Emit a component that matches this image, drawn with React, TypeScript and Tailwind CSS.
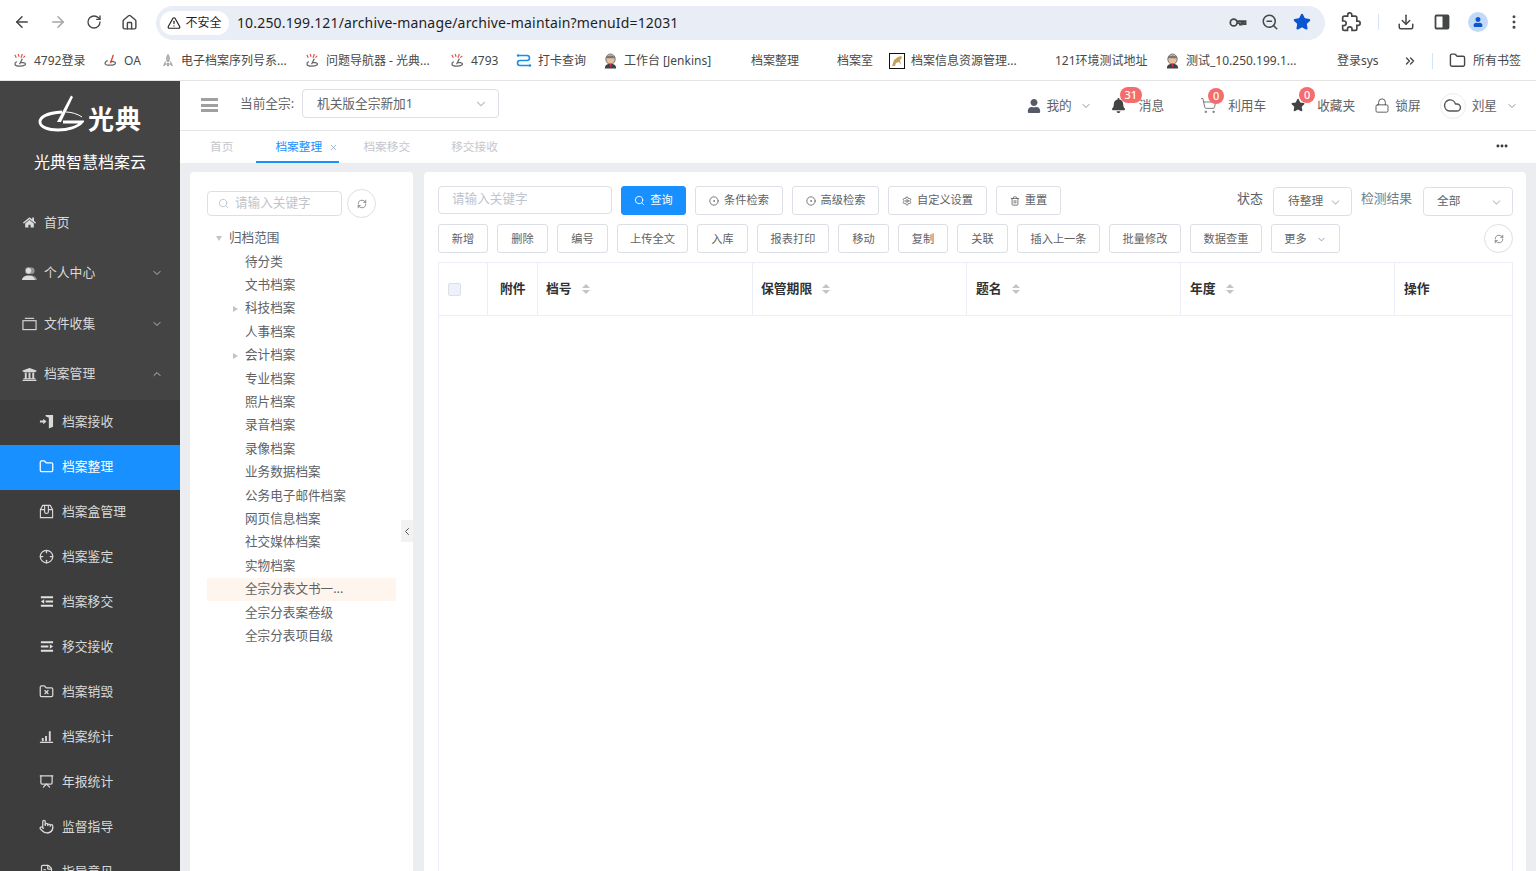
import React from "react";
import {
  ArrowLeft, ArrowRight, RotateCw, Home, TriangleAlert, ZoomOut, Star, Download, EllipsisVertical,
  ChevronsRight, Folder, ChevronDown, ChevronUp, ChevronLeft, Search, CircleDot, Settings, Trash2, ShoppingCart, Lock, Cloud, X, Ellipsis,
  Crosshair, FolderX, Presentation, Pointer, FileText, RefreshCw,
} from "lucide-react";
import { FaHome, FaUser, FaBell, FaStar, FaUniversity } from "react-icons/fa";

const Guang = () => (
  <svg viewBox="0 0 16 16" className="w-[15px] h-[15px] shrink-0">
    <path d="M2 2l1.5 3M5.5 1l1 3M10 1L8.5 5M13 3l-2 2" stroke="#e0584f" strokeWidth="1.3" fill="none" />
    <path d="M10 6L7 12M4 9c-3 2-3 5 3 5s7-2 6-3c-1-1-3-1-5-1" stroke="#666" strokeWidth="1.3" fill="none" />
  </svg>
);
const Oa = () => (
  <svg viewBox="0 0 16 16" className="w-[15px] h-[15px] shrink-0">
    <path d="M11 2L8 11" stroke="#d9453d" strokeWidth="1.5" fill="none" />
    <path d="M5 8c-4 2-4 5 2 5s7-2 6-3c-1-1-3-1-5-1" stroke="#666" strokeWidth="1.3" fill="none" />
  </svg>
);
const Rocket = () => (
  <svg viewBox="0 0 16 16" className="w-[14px] h-[15px] shrink-0">
    <path d="M8 1c2 3 2 5 1 8H7C6 6 6 4 8 1zM5 9l-2 5 3-2M11 9l2 5-3-2M7 11h2v3H7z" fill="#bbb" stroke="#777" strokeWidth=".6" />
  </svg>
);
const Flow = () => (
  <svg viewBox="0 0 16 16" className="w-[16px] h-[16px] shrink-0">
    <path d="M2 2.500h9a2.500 2.500 0 010 5H4a2.500 2.500 0 000 5h10" stroke="#1a8cf0" strokeWidth="1.6" fill="none" />
    <circle cx="2" cy="2.500" r="1.2" fill="#1a8cf0" />
    <circle cx="14" cy="12.500" r="1.2" fill="#1a8cf0" />
  </svg>
);
const Jenkins = () => (
  <svg viewBox="0 0 16 16" className="w-[15px] h-[16px] shrink-0">
    <ellipse cx="8" cy="6" rx="5" ry="5.500" fill="#e8bfa0" stroke="#555" strokeWidth=".8" />
    <path d="M3 5c0-4 10-4 10 0" fill="#777" />
    <path d="M2 16c0-4 3-5 6-5s6 1 6 5z" fill="#3f3f4f" />
    <path d="M7 11h2l-.4 3h-1.200z" fill="#d33" />
  </svg>
);
const Cat = () => (
  <svg viewBox="0 0 16 16" className="w-[16px] h-[16px] shrink-0">
    <rect x=".5" y=".5" width="15" height="15" fill="#fff" stroke="#111" />
    <path d="M3 13l2-6 4-3 3-1 1 2-2 2 1 5-2-3-3 1-1 3z" fill="#c9a15a" />
  </svg>
);

const bookmarks: { w: string; t: string; i?: React.ReactNode }[] = [
  { w: "w-[74px]", t: "4792登录", i: <Guang /> },
  { w: "w-[42px]", t: "OA", i: <Oa /> },
  { w: "w-[128px]", t: "电子档案序列号系...", i: <Rocket /> },
  { w: "w-[129px]", t: "问题导航器 - 光典...", i: <Guang /> },
  { w: "w-[50px]", t: "4793", i: <Guang /> },
  { w: "w-[71px]", t: "打卡查询", i: <Flow /> },
  { w: "w-[110px]", t: "工作台 [Jenkins]", i: <Jenkins /> },
];

const Bookmark = ({ w, t, i }: { w: string; t: string; i?: React.ReactNode }) => (
  <div className={`${w} flex items-center gap-[6px] shrink-0 whitespace-nowrap`}>
    {i}
    <span>{t}</span>
  </div>
);

const KeyIcon = () => (
  <svg viewBox="0 0 20 20" className="w-[19px] h-[19px]" fill="none" stroke="currentColor" strokeWidth="1.8">
    <circle cx="6" cy="10" r="3.600" />
    <path d="M9.600 8.600H18.500v3.200h-2v-1.400h-2v1.800h-2v-1.600H9.600" />
  </svg>
);
const ExtIcon = () => (
  <svg viewBox="0 0 24 24" className="w-[20px] h-[20px]" fill="none" stroke="currentColor" strokeWidth="2">
    <path d="M20.500 11H19V7a2 2 0 00-2-2h-4V3.500a2.500 2.500 0 00-5 0V5H4a2 2 0 00-2 2v3.800h1.500a2.700 2.700 0 010 5.400H2V20a2 2 0 002 2h3.800v-1.500a2.700 2.700 0 015.400 0V22H17a2 2 0 002-2v-4h1.500a2.500 2.500 0 000-5z" />
  </svg>
);
const SideIcon = () => (
  <svg viewBox="0 0 18 18" className="w-[18px] h-[18px]">
    <rect x="2.500" y="2.500" width="13" height="13" rx="1" fill="none" stroke="currentColor" strokeWidth="1.8" />
    <rect x="9.500" y="2.500" width="6" height="13" fill="currentColor" />
  </svg>
);

const ChromeBar = () => (
  <div className="h-[81px] bg-white border-b border-[#e3e3e3] shrink-0">
    <div className="h-[44px] flex items-center pl-[13px] pr-[13px] text-[#444746]">
      <ArrowLeft className="w-[18px] h-[18px]" />
      <ArrowRight className="w-[18px] h-[18px] ml-[18px] text-[#a5a5a5]" />
      <RotateCw className="w-[16px] h-[16px] ml-[19px]" />
      <Home className="w-[17px] h-[17px] ml-[19px]" />
      <div className="ml-[18px] mt-[2px] w-[1170px] h-[34px] rounded-full bg-[#e9edf6] flex items-center pl-[4px] pr-[14px]">
        <div className="w-[69px] h-[24px] rounded-full bg-white flex items-center justify-center gap-[4px] text-[12px] text-[#1f1f1f]">
          <TriangleAlert className="w-[14px] h-[14px]" />
          <span>不安全</span>
        </div>
        <span className="ml-[8px] -mt-[2px] text-[14px] tracking-[0.17px] text-[#1f1f1f] whitespace-nowrap">10.250.199.121/archive-manage/archive-maintain?menuId=12031</span>
        <div className="ml-auto -mt-[2px] flex items-center gap-[14px]">
          <KeyIcon />
          <ZoomOut className="w-[18px] h-[18px]" />
          <Star className="w-[18px] h-[18px] text-[#0b57d0] fill-[#0b57d0]" />
        </div>
      </div>
      <div className="ml-[16px] flex"><ExtIcon /></div>
      <div className="ml-[17px] w-px h-[16px] bg-[#d3e3fd]" />
      <Download className="ml-[18px] w-[18px] h-[18px]" />
      <div className="ml-[18px] flex"><SideIcon /></div>
      <div className="ml-[17px] w-[20px] h-[20px] rounded-full bg-[#c2d9f8] flex items-center justify-center">
        <FaUser className="w-[10px] h-[10px] text-[#0b57d0]" />
      </div>
      <EllipsisVertical className="ml-[17px] w-[18px] h-[18px]" />
    </div>
    <div className="h-[36px] pb-[3px] flex items-center pl-[13px] text-[12px] text-[#474747] gap-[16px]">
      {bookmarks.map((b) => <Bookmark key={b.t} {...b} />)}
      <span className="ml-[22px] w-[48px] shrink-0">档案整理</span>
      <span className="ml-[22px] w-[36px] shrink-0">档案室</span>
      <Bookmark w="w-[128px]" t="档案信息资源管理..." i={<Cat />} />
      <span className="ml-[22px] w-[94px] shrink-0 whitespace-nowrap">121环境测试地址</span>
      <Bookmark w="w-[134px]" t="测试_10.250.199.1..." i={<Jenkins />} />
      <span className="ml-[22px] w-[44px] shrink-0">登录sys</span>
      <ChevronsRight className="ml-[6px] w-[14px] h-[14px] shrink-0" strokeWidth={2.4} />
      <div className="-ml-[1px] w-px h-[16px] bg-[#d3e3fd]" />
      <Folder className="w-[17px] h-[17px] shrink-0" />
      <span className="-ml-[9px] whitespace-nowrap">所有书签</span>
    </div>
  </div>
);

const Top = ({ icon, t, arrow }: { icon: React.ReactNode; t: string; arrow?: "d" | "u" }) => (
  <div className="h-[50.500px] pb-[1.500px] shrink-0 flex items-center pl-[21px] pr-[17px] text-[12.800px] text-[#d9d9d9]">
    <span className="w-[16px] h-[16px] flex items-center justify-center">{icon}</span>
    <span className="ml-[7px]">{t}</span>
    {arrow === "d" && <ChevronDown className="ml-auto w-[12px] h-[12px] text-[#bdbdbd]" />}
    {arrow === "u" && <ChevronUp className="ml-auto w-[12px] h-[12px] text-[#bdbdbd]" />}
  </div>
);

const Sub = ({ icon, t, active }: { icon: React.ReactNode; t: string; active?: boolean }) => (
  <div className={`h-[45px] pb-[2px] shrink-0 flex items-center pl-[39px] text-[12.800px] ${active ? "bg-[#1890ff] text-white" : "text-[#d9d9d9]"}`}>
    <span className="w-[15px] h-[15px] flex items-center justify-center">{icon}</span>
    <span className="ml-[8px]">{t}</span>
  </div>
);

const ic = "w-[15px] h-[15px]";

const PersonIcon = () => (
  <svg viewBox="0 0 16 16" className="w-[15px] h-[15px]">
    <circle cx="10" cy="5" r="3.400" fill="#999" />
    <path d="M7 15c0-4 1-5 3-5s5 1 6 5z" fill="#999" />
    <circle cx="7" cy="5" r="3.600" fill="#ddd" stroke="#444" strokeWidth=".5" />
    <path d="M0 15c0-3 3-5 7-5s6 2 7 5z" fill="#ddd" />
  </svg>
);
const TrayIcon = () => (
  <svg viewBox="0 0 16 16" className="w-[15px] h-[15px]" fill="none" stroke="#d9d9d9" strokeWidth="1.2">
    <rect x="1" y="5" width="14" height="9.500" />
    <path d="M3 2.500h10" />
  </svg>
);
const DoorIcon = () => (
  <svg viewBox="0 0 16 16" className={ic}>
    <path d="M7 1h8v12.500l-4.500 2V4L7 2.500z" fill="#d9d9d9" />
    <path d="M1 7h3.500V5L8 8l-3.500 3V9H1z" fill="#d9d9d9" />
  </svg>
);
const BoxIcon = () => (
  <svg viewBox="0 0 16 16" className={ic} fill="none" stroke="#d9d9d9" strokeWidth="1.2">
    <path d="M1.500 6L4 1.500h8L14.500 6v8.500h-13zM1.500 6h4.500v2.500c0 2 4 2 4 0V6h4.500M6 1.500V6M10 1.500V6" />
  </svg>
);
const OutIcon = () => (
  <svg viewBox="0 0 16 16" className={ic}>
    <path d="M2 2.500h13v2H2zM2 11.500h13v2H2zM7 7h8v2H7z" fill="#e0e0e0" />
    <path d="M2 8l3.500-2.500v5z" fill="#e0e0e0" />
  </svg>
);
const InIcon = () => (
  <svg viewBox="0 0 16 16" className={ic}>
    <path d="M2 2.500h13v2H2zM2 11.500h13v2H2zM2 7h8v2H2z" fill="#e0e0e0" />
    <path d="M15 8l-3.500-2.500v5z" fill="#e0e0e0" />
  </svg>
);
const BarsIcon = () => (
  <svg viewBox="0 0 16 16" className={ic}>
    <path d="M1 13.500h14V15H1zM3 9.500h2v3.500H3zM6.500 7.500h2v5.500h-2zM10.500 2.500h2v10.500h-2z" fill="#d9d9d9" />
  </svg>
);

const Sidebar = () => (
  <div className="w-[180px] shrink-0 bg-[#444444] overflow-hidden h-full flex flex-col">
    <div className="h-[117px] shrink-0 flex flex-col items-center">
      <div className="mt-[14px] flex items-end h-[38px]">
        <svg viewBox="0 0 46 38" className="w-[46px] h-[38px]">
          <path d="M33 0.500l2 1.500L23 27h-4z" fill="#fff" />
          <path d="M24 17C9 18 2 22 2 27c0 5 8 8 18 8 10 0 20-3 24-8H25" stroke="#fff" strokeWidth="2.800" fill="none" />
          <path d="M28 17c5 0 12 2 16 5" stroke="#fff" strokeWidth="1" fill="none" />
        </svg>
        <span className="ml-[4px] text-[26px] leading-[30px] font-bold text-white tracking-[1px] -mb-[1px]">光典</span>
      </div>
      <div className="mt-[19px] text-[16px] leading-[20px] text-white whitespace-nowrap">光典智慧档案云</div>
    </div>
    <Top icon={<FaHome className="w-[13px] h-[13px]" />} t="首页" />
    <Top icon={<PersonIcon />} t="个人中心" arrow="d" />
    <Top icon={<TrayIcon />} t="文件收集" arrow="d" />
    <Top icon={<FaUniversity className="w-[15px] h-[15px]" />} t="档案管理" arrow="u" />
    <div className="bg-[#3d3d3d] flex-1 flex flex-col">
      <Sub icon={<DoorIcon />} t="档案接收" />
      <Sub icon={<Folder className={ic} />} t="档案整理" active />
      <Sub icon={<BoxIcon />} t="档案盒管理" />
      <Sub icon={<Crosshair className={ic} />} t="档案鉴定" />
      <Sub icon={<OutIcon />} t="档案移交" />
      <Sub icon={<InIcon />} t="移交接收" />
      <Sub icon={<FolderX className={ic} />} t="档案销毁" />
      <Sub icon={<BarsIcon />} t="档案统计" />
      <Sub icon={<Presentation className={ic} />} t="年报统计" />
      <Sub icon={<Pointer className={ic} />} t="监督指导" />
      <Sub icon={<FileText className={ic} />} t="指导意见" />
    </div>
  </div>
);

const Badge = ({ t, cls }: { t: string; cls: string }) => (
  <span className={`absolute h-[16px] rounded-full bg-[#f56c6c] text-white text-[11px] leading-[16px] text-center font-medium ${cls}`}>{t}</span>
);

const Header = () => (
  <div className="h-[50px] shrink-0 bg-white border-b border-[#e4e5e7] flex items-center pl-[21px] pr-[18px] text-[12.700px] text-[#5f6266]">
    <div className="w-[17px] flex flex-col gap-[2.500px] -mt-[1px]">
      <span className="h-[3px] bg-[#a0a0a0]" />
      <span className="h-[3px] bg-[#a0a0a0]" />
      <span className="h-[3px] bg-[#a0a0a0]" />
    </div>
    <span className="ml-[22px] w-[55px] whitespace-nowrap -mt-[4px]">当前全宗:</span>
    <div className="ml-[7px] -mt-[4px] w-[197px] h-[29px] border border-[#dcdfe6] rounded-[4px] flex items-center pl-[14px] pr-[10px]">
      <span>机关版全宗新加1</span>
      <ChevronDown className="ml-auto w-[14px] h-[14px] text-[#c0c4cc]" />
    </div>
    <div className="ml-auto flex items-center">
      <FaUser className="w-[14px] h-[14px] text-[#555b66]" />
      <span className="ml-[5px]">我的</span>
      <ChevronDown className="ml-[8px] w-[12px] h-[12px] text-[#909399]" />
      <div className="relative ml-[19px] flex items-center">
        <FaBell className="w-[15px] h-[15px] text-[#444]" />
        <Badge t="31" cls="left-[9px] -top-[9px] w-[22px]" />
        <span className="ml-[13px]">消息</span>
      </div>
      <div className="relative ml-[36px] flex items-center">
        <ShoppingCart className="w-[17px] h-[17px] text-[#666]" strokeWidth={1.2} />
        <Badge t="0" cls="left-[8px] -top-[8px] w-[16px]" />
        <span className="ml-[11px]">利用车</span>
      </div>
      <div className="relative ml-[25px] flex items-center">
        <FaStar className="w-[14px] h-[14px] text-[#444]" />
        <Badge t="0" cls="left-[8px] -top-[9px] w-[16px]" />
        <span className="ml-[12px]">收藏夹</span>
      </div>
      <Lock className="ml-[19px] w-[16px] h-[17px] text-[#555]" strokeWidth={1.4} />
      <span className="ml-[5px]">锁屏</span>
      <div className="ml-[19px] w-[26px] h-[26px] rounded-full border border-[#ececec] flex items-center justify-center">
        <Cloud className="w-[19px] h-[19px] text-[#555]" strokeWidth={1.8} />
      </div>
      <span className="ml-[6px]">刘星</span>
      <ChevronDown className="ml-[9px] w-[12px] h-[12px] text-[#909399]" />
    </div>
  </div>
);

const Tabs = () => (
  <div className="h-[32px] shrink-0 bg-white flex text-[11.700px] text-[#c4c7cc] pl-[30px] pr-[27px] items-stretch">
    <span className="pt-[7px]">首页</span>
    <div className="ml-[23px] w-[83px] flex border-b-2 border-[#1890ff] pl-[19px] pt-[7px] text-[#1890ff]">
      <span>档案整理</span>
      <X className="ml-[7px] mt-[5px] w-[9px] h-[9px] text-[#8aa0c8]" />
    </div>
    <span className="ml-[24px] pt-[7px]">档案移交</span>
    <span className="ml-[41px] pt-[7px]">移交接收</span>
    <Ellipsis className="ml-auto mt-[8px] w-[14px] h-[14px] text-[#303133]" strokeWidth={3} />
  </div>
);

const tree: { t: string; arrow?: boolean; sel?: boolean }[] = [
  { t: "待分类" }, { t: "文书档案" }, { t: "科技档案", arrow: true }, { t: "人事档案" }, { t: "会计档案", arrow: true },
  { t: "专业档案" }, { t: "照片档案" }, { t: "录音档案" }, { t: "录像档案" }, { t: "业务数据档案" }, { t: "公务电子邮件档案" },
  { t: "网页信息档案" }, { t: "社交媒体档案" }, { t: "实物档案" }, { t: "全宗分表文书一...", sel: true }, { t: "全宗分表案卷级" }, { t: "全宗分表项目级" },
];

const Refresh = ({ cls }: { cls: string }) => (
  <div className={`w-[29px] h-[29px] shrink-0 rounded-full border border-[#dcdfe6] flex items-center justify-center ${cls}`}>
    <RefreshCw className="w-[10px] h-[10px] text-[#777]" />
  </div>
);

const LeftPanel = () => (
  <div className="relative w-[223px] shrink-0 bg-white rounded-t-[4px] pl-[17px] pr-[17px] pt-[17px] text-[12.600px] text-[#606266]">
    <div className="flex items-center">
      <div className="w-[135px] h-[25px] border border-[#dcdfe6] rounded-[4px] flex items-center pl-[10px] text-[#c0c4cc]">
        <Search className="w-[11px] h-[11px]" />
        <span className="ml-[6px] pb-[1px]">请输入关键字</span>
      </div>
      <Refresh cls="ml-[5px]" />
    </div>
    <div className="mt-[9px]">
      <div className="h-[23.400px] flex items-center pl-[9px]">
        <span className="w-0 h-0 border-x-[3.500px] border-x-transparent border-t-[5px] border-t-[#c0c4cc]" />
        <span className="ml-[7px]">归档范围</span>
      </div>
      {tree.map((n) => (
        <div key={n.t} className={`h-[23.400px] flex items-center pl-[38px] relative whitespace-nowrap w-[189px] ${n.sel ? "bg-[#fdf5ee]" : ""}`}>
          {n.arrow && <span className="absolute left-[26px] w-0 h-0 border-y-[3.500px] border-y-transparent border-l-[5px] border-l-[#c0c4cc]" />}
          {n.t}
        </div>
      ))}
    </div>
    <div className="absolute right-0 top-[348px] w-[12px] h-[22px] bg-[#f2f2f2] flex items-center justify-center">
      <ChevronLeft className="w-[13px] h-[13px] text-[#555]" />
    </div>
  </div>
);

const Btn = ({ w, children, cls }: { w: string; children: React.ReactNode; cls?: string }) => (
  <div className={`${w} h-[29px] shrink-0 border border-[#dcdfe6] rounded-[3px] flex items-center justify-center gap-[5px] text-[11.200px] text-[#606266] whitespace-nowrap ${cls ?? ""}`}>{children}</div>
);

const Sorter = () => (
  <span className="ml-[10px] flex flex-col gap-[2px]">
    <span className="w-0 h-0 border-x-[4px] border-x-transparent border-b-[4px] border-b-[#c0c4cc]" />
    <span className="w-0 h-0 border-x-[4px] border-x-transparent border-t-[4px] border-t-[#c0c4cc]" />
  </span>
);

const Th = ({ w, t, pl }: { w: string; t: string; pl: string }) => (
  <div className={`${w} ${pl} shrink-0 border-r border-[#ebeef5] flex items-center`}>
    <span>{t}</span>
    <Sorter />
  </div>
);

const row2: [string, string][] = [
  ["w-[50px]", "新增"], ["w-[51px]", "删除"], ["w-[51px]", "编号"], ["w-[71px]", "上传全文"], ["w-[51px]", "入库"], ["w-[72px]", "报表打印"],
  ["w-[51px]", "移动"], ["w-[50px]", "复制"], ["w-[51px]", "关联"], ["w-[83px]", "插入上一条"], ["w-[72px]", "批量修改"], ["w-[72px]", "数据查重"],
];

const RightPanel = () => (
  <div className="flex-1 ml-[11px] bg-white rounded-t-[4px] pl-[14px] pr-[13px] pt-[14px] flex flex-col text-[#606266] min-w-0">
    <div className="flex items-start h-[29px]">
      <div className="w-[174px] h-[28px] pb-[1px] border border-[#dcdfe6] rounded-[4px] flex items-center pl-[13px] text-[12.600px] text-[#c0c4cc]">请输入关键字</div>
      <Btn w="w-[65px]" cls="ml-[9px] !bg-[#1890ff] !border-[#1890ff] !text-white"><Search className="w-[11px] h-[11px]" />查询</Btn>
      <Btn w="w-[88px]" cls="ml-[9px]"><CircleDot className="w-[10px] h-[10px]" />条件检索</Btn>
      <Btn w="w-[87px]" cls="ml-[9px]"><CircleDot className="w-[10px] h-[10px]" />高级检索</Btn>
      <Btn w="w-[99px]" cls="ml-[9px]"><Settings className="w-[10px] h-[10px]" />自定义设置</Btn>
      <Btn w="w-[65px]" cls="ml-[9px]"><Trash2 className="w-[10px] h-[10px]" />重置</Btn>
      <span className="ml-auto text-[13px] leading-[25px]">状态</span>
      <div className="ml-[10px] mt-[1px] w-[79px] h-[29px] border border-[#dcdfe6] rounded-[4px] flex items-center pl-[14px] pr-[9px] text-[11.700px] pb-[2px]">
        待整理<ChevronDown className="ml-auto mt-[4px] w-[13px] h-[13px] text-[#c0c4cc]" />
      </div>
      <span className="ml-[9px] w-[51px] text-[12.750px] leading-[25px] text-[#6b7d8f] whitespace-nowrap">检测结果</span>
      <div className="ml-[11px] mt-[1px] w-[90px] h-[29px] border border-[#dcdfe6] rounded-[4px] flex items-center pl-[13px] pr-[9px] text-[11.700px] pb-[2px]">
        全部<ChevronDown className="ml-auto mt-[4px] w-[13px] h-[13px] text-[#c0c4cc]" />
      </div>
    </div>
    <div className="flex items-center gap-[9px] mt-[9px]">
      {row2.map(([w, t]) => <Btn key={t} w={w} cls="pt-[1px]">{t}</Btn>)}
      <Btn w="w-[69px]" cls="gap-[9px] pt-[1px]">更多<ChevronDown className="w-[11px] h-[11px] text-[#909399]" /></Btn>
      <Refresh cls="ml-auto" />
    </div>
    <div className="mt-[9px] flex-1 border border-[#ebeef5] border-b-0">
      <div className="h-[53px] border-b border-[#ebeef5] flex text-[12.800px] font-bold text-[#303133]">
        <div className="w-[49px] shrink-0 border-r border-[#ebeef5] flex items-center pl-[9px]">
          <span className="w-[13px] h-[13px] rounded-[2px] border border-[#dcdfe6] bg-[#eef1fb]" />
        </div>
        <div className="w-[50px] shrink-0 border-r border-[#ebeef5] flex items-center pl-[12px]">附件</div>
        <Th w="w-[215px]" pl="pl-[8px]" t="档号" />
        <Th w="w-[214px]" pl="pl-[8px]" t="保管期限" />
        <Th w="w-[214px]" pl="pl-[9px]" t="题名" />
        <Th w="w-[214px]" pl="pl-[9px]" t="年度" />
        <div className="pl-[9px] flex items-center">操作</div>
      </div>
    </div>
  </div>
);

export default function App() {
  return (
    <div className="w-[1536px] h-[871px] overflow-hidden flex flex-col bg-white font-['Noto_Sans','Noto_Sans_CJK_SC',sans-serif]">
      <ChromeBar />
      <div className="flex flex-1 min-h-0">
        <Sidebar />
        <div className="flex-1 flex flex-col min-w-0">
          <Header />
          <Tabs />
          <div className="flex-1 min-h-0 bg-[#ebedf0] flex pl-[10px] pr-[10px] pt-[9px]">
            <LeftPanel />
            <RightPanel />
          </div>
        </div>
      </div>
    </div>
  );
}
